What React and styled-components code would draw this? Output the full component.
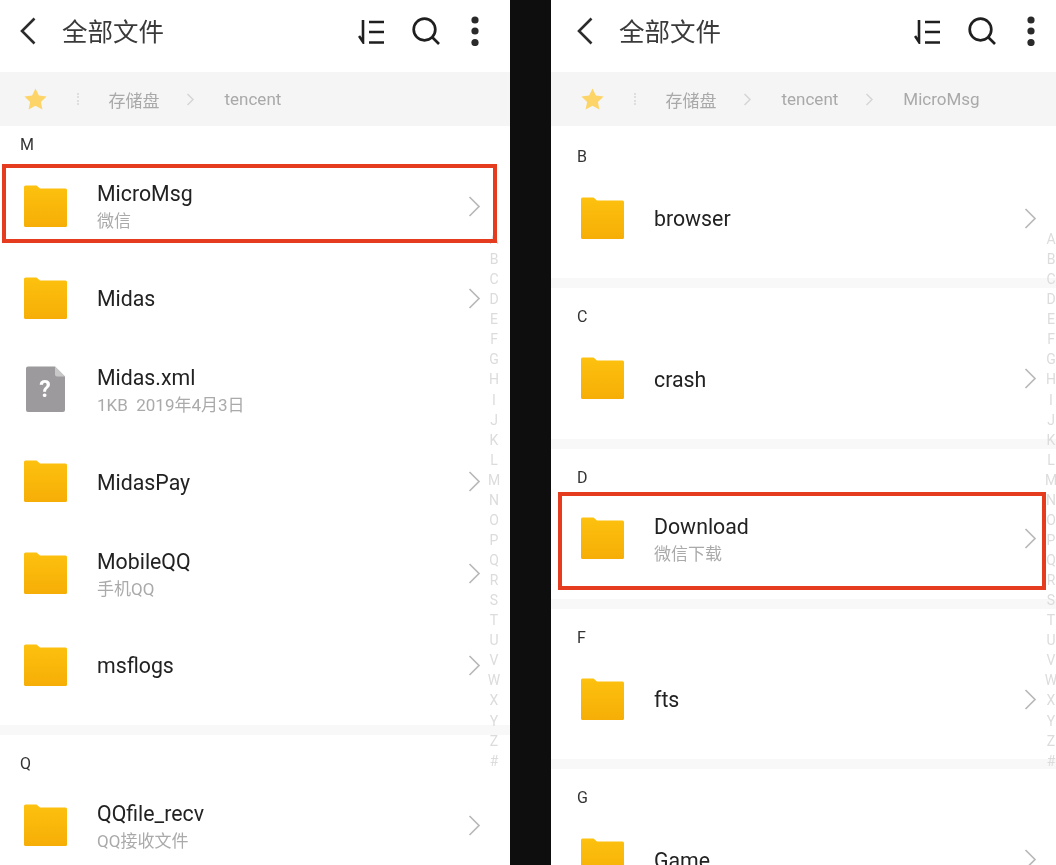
import React from 'react';
import styled, { createGlobalStyle } from 'styled-components';

const GlobalStyle = createGlobalStyle`
  html, body {
    margin: 0;
    padding: 0;
    background: #fff;
    font-family: Roboto, "Noto Sans CJK SC", sans-serif;
  }
`;

const LETTERS = 'ABCDEFGHIJKLMNOPQRSTUVWXYZ#'.split('');

const leftSections = [
  {
    label: 'M',
    top: 9,
    rows: [
      { name: 'MicroMsg', sub: '微信', box: { top: 3, bottom: 9, left: 2, right: 13 } },
      { name: 'Midas' },
      { name: 'Midas.xml', sub: '1KB  2019年4月3日', file: true },
      { name: 'MidasPay' },
      { name: 'MobileQQ', sub: '手机QQ' },
      { name: 'msflogs' },
    ],
  },
  { label: 'Q', top: 19, band: true, rows: [{ name: 'QQfile_recv', sub: 'QQ接收文件' }] },
];

const rightSections = [
  { label: 'B', top: 21, rows: [{ name: 'browser' }] },
  { label: 'C', top: 19, band: true, rows: [{ name: 'crash' }] },
  {
    label: 'D',
    top: 19,
    band: true,
    rows: [{ name: 'Download', sub: '微信下载', box: { top: -1, bottom: -5, left: 7, right: 10 } }],
  },
  { label: 'F', top: 19, band: true, rows: [{ name: 'fts' }] },
  { label: 'G', top: 19, band: true, rows: [{ name: 'Game' }] },
];

function FolderIcon() {
  return (
    <IconSlot>
      <svg width="43" height="43" viewBox="0 0 43 43">
        <defs>
          <linearGradient id="folderFill" x1="0" y1="0" x2="0" y2="1">
            <stop offset="0" stopColor="#fdc10f" />
            <stop offset="1" stopColor="#f6ae06" />
          </linearGradient>
        </defs>
        <path
          d="M1.500 0.500H12.500L16 3.500H41.500A1.500 1.500 0 0 1 43 5V40.500A1.500 1.500 0 0 1 41.500 42H1.500A1.500 1.500 0 0 1 0 40.500V2A1.500 1.500 0 0 1 1.500 0.500Z"
          fill="url(#folderFill)"
        />
      </svg>
    </IconSlot>
  );
}

function UnknownFileIcon() {
  return (
    <IconSlot>
      <svg width="43" height="47" viewBox="0 0 43 47">
        <path
          d="M4 0.500H31L41 10.500V44A2 2 0 0 1 39 46H4A2 2 0 0 1 2 44V2.500A2 2 0 0 1 4 0.500Z"
          fill="#9c9a9c"
        />
        <path d="M31 0.500L41 10.500H33A2 2 0 0 1 31 8.500Z" fill="#c9c8c9" />
        <text x="21" y="31" textAnchor="middle" fontSize="23" fontWeight="700" fill="#fff" fontFamily="Roboto, sans-serif">
          ?
        </text>
      </svg>
    </IconSlot>
  );
}

function Chevron({ small }) {
  return small ? (
    <svg width="9" height="13" viewBox="0 0 9 13">
      <path d="M1.500 1L7 6.500L1.500 12" fill="none" stroke="#d6d6d6" strokeWidth="1.500" />
    </svg>
  ) : (
    <svg width="13" height="21" viewBox="0 0 13 21">
      <path d="M1.500 1L11 10.500L1.500 20" fill="none" stroke="#b9b9b9" strokeWidth="1.700" />
    </svg>
  );
}

function Header() {
  return (
    <TopBar>
      <svg width="16" height="28" viewBox="0 0 16 28">
        <path d="M14.500 1.500L2 14L14.500 26.500" fill="none" stroke="#2c2c2c" strokeWidth="2.600" />
      </svg>
      <Title>全部文件</Title>
      <TopActions>
        <svg width="27" height="25" viewBox="0 0 27 25">
          <path
            d="M5 1V23L1 17M11 3H26M11 13H26M11 23.500H26"
            fill="none"
            stroke="#1f1f1f"
            strokeWidth="2.600"
          />
        </svg>
        <svg width="28" height="28" viewBox="0 0 28 28">
          <circle cx="12.500" cy="12.500" r="10.800" fill="none" stroke="#1f1f1f" strokeWidth="2.700" />
          <path d="M20 20L27 27" stroke="#1f1f1f" strokeWidth="2.700" />
        </svg>
        <svg width="8" height="30" viewBox="0 0 8 30">
          <circle cx="4" cy="4" r="3.600" fill="#2a2a2a" />
          <circle cx="4" cy="15" r="3.600" fill="#2a2a2a" />
          <circle cx="4" cy="26.500" r="3.600" fill="#2a2a2a" />
        </svg>
      </TopActions>
    </TopBar>
  );
}

function Breadcrumb({ path }) {
  return (
    <Crumbs>
      <svg width="23" height="22" viewBox="0 0 23 22">
        <path
          d="M11.500 0.500L14.900 7.600L22.600 8.600L16.900 14L18.400 21.600L11.500 17.800L4.600 21.600L6.100 14L0.400 8.600L8.100 7.600Z"
          fill="#fcd468"
        />
      </svg>
      <CrumbDivider />
      {path.map((part, i) => (
        <React.Fragment key={part}>
          {i > 0 && <Chevron small />}
          <CrumbText>{part}</CrumbText>
        </React.Fragment>
      ))}
    </Crumbs>
  );
}

function FileRow({ row }) {
  return (
    <Row>
      {row.file ? <UnknownFileIcon /> : <FolderIcon />}
      <RowText $twoLines={Boolean(row.sub)}>
        <Name>{row.name}</Name>
        {row.sub && <Sub>{row.sub}</Sub>}
      </RowText>
      {!row.file && <Chevron />}
      {row.box && <Highlight $box={row.box} />}
    </Row>
  );
}

function Phone({ width, inset, trail, indexRight, path, sections }) {
  return (
    <Panel $width={width} $inset={inset} $trail={trail}>
      <Header />
      <Breadcrumb path={path} />
      {sections.map((section) => (
        <section key={section.label}>
          {section.band && <Band />}
          <GroupLabel $top={section.top}>{section.label}</GroupLabel>
          {section.rows.map((row) => (
            <FileRow key={row.name} row={row} />
          ))}
        </section>
      ))}
      <LetterIndex $right={indexRight}>
        {LETTERS.map((letter) => (
          <span key={letter}>{letter}</span>
        ))}
      </LetterIndex>
    </Panel>
  );
}

export default function App() {
  return (
    <Page>
      <GlobalStyle />
      <Phone
        width={510}
        inset={0}
        trail={30}
        indexRight={8}
        path={['存储盘', 'tencent']}
        sections={leftSections}
      />
      <Gap />
      <Phone
        width={505}
        inset={6}
        trail={20}
        indexRight={-3}
        path={['存储盘', 'tencent', 'MicroMsg']}
        sections={rightSections}
      />
    </Page>
  );
}

const Page = styled.div`
  display: flex;
  width: 1056px;
  height: 865px;
  overflow: hidden;
  background: #fff;
`;

const Gap = styled.div`
  flex: 0 0 41px;
  background: #0e0e0e;
`;

const Panel = styled.div`
  --inset: ${(p) => p.$inset}px;
  --trail: ${(p) => p.$trail}px;
  position: relative;
  flex: 0 0 ${(p) => p.$width}px;
  height: 865px;
  overflow: hidden;
  background: #fff;
  filter: blur(0.35px);
`;

const TopBar = styled.header`
  display: flex;
  align-items: center;
  height: 72px;
  box-sizing: border-box;
  padding: 0 var(--trail) 10px calc(var(--inset) + 20px);
`;

const Title = styled.h1`
  margin: 0 0 4px 26px;
  font-size: 25.5px;
  font-weight: 400;
  color: #3a3a3a;
  font-family: "Noto Sans CJK SC", sans-serif;
`;

const TopActions = styled.div`
  display: flex;
  align-items: center;
  gap: 27px;
  margin-left: auto;
  margin-right: 1px;

  svg:last-child {
    margin-left: 4px;
  }
`;

const Crumbs = styled.nav`
  display: flex;
  align-items: center;
  height: 54px;
  box-sizing: border-box;
  padding-left: calc(var(--inset) + 24px);
  background: #f5f5f5;

  svg + span {
    margin-left: 29.5px;
  }
`;

const CrumbDivider = styled.i`
  width: 0;
  height: 12px;
  margin: 0 29.5px 0 30px;
  border-left: 2px dotted #dedede;
`;

const CrumbText = styled.span`
  font-size: 17px;
  color: #a9a9a9;

  & + svg {
    margin-left: 26.5px;
  }
`;

const Band = styled.div`
  height: 10px;
  margin-top: 14px;
  background: #f8f8f8;
`;

const GroupLabel = styled.div`
  padding: ${(p) => p.$top}px 0 0 calc(var(--inset) + 20px);
  margin-bottom: 5.5px;
  font-size: 16px;
  line-height: 20px;
  color: #333;
`;

const Row = styled.div`
  position: relative;
  display: flex;
  align-items: center;
  height: 91.8px;
  box-sizing: border-box;
  padding: 0 calc(var(--trail) - 1px) 0 calc(var(--inset) + 24px);
`;

const IconSlot = styled.div`
  display: flex;
  flex: 0 0 43px;
  justify-content: center;
`;

const RowText = styled.div`
  flex: 1;
  min-width: 0;
  padding: ${(p) => (p.$twoLines ? 4 : 1)}px 0 0 30px;
`;

const Name = styled.div`
  font-size: 21.3px;
  line-height: 27px;
  color: #222;
`;

const Sub = styled.div`
  font-size: 17px;
  line-height: 29px;
  color: #aaa;
  white-space: pre;
`;

const Highlight = styled.div`
  position: absolute;
  top: ${(p) => p.$box.top}px;
  bottom: ${(p) => p.$box.bottom}px;
  left: ${(p) => p.$box.left}px;
  right: ${(p) => p.$box.right}px;
  z-index: 2;
  border: 4px solid #e53b1e;
  background: transparent;
`;

const LetterIndex = styled.div`
  position: absolute;
  top: 229px;
  right: ${(p) => p.$right}px;
  display: flex;
  flex-direction: column;
  width: 16px;
  font-size: 14px;
  line-height: 20.07px;
  text-align: center;
  color: #dcdcdc;
`;
